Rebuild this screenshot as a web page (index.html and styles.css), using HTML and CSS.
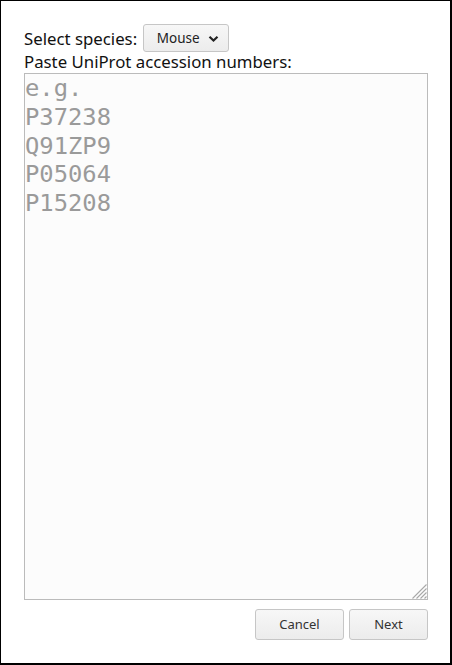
FILE: index.html
```html
<!DOCTYPE html>
<html>
<head>
<meta charset="utf-8">
<link rel="stylesheet" href="styles.css">
</head>
<body>
<div class="frame">
  <div class="species-row">
    <span class="label">Select species:</span>
    <button class="select-btn" type="button">Mouse
      <svg class="chev" width="11" height="8" viewBox="0 0 11 8"><path d="M1.5 1.8 L5.5 5.6 L9.5 1.8" fill="none" stroke="#222" stroke-width="2.2"/></svg>
    </button>
  </div>
  <div class="label paste-label">Paste UniProt accession numbers:</div>
  <div class="acc-wrap">
    <textarea class="acc" placeholder="e.g.&#10;P37238&#10;Q91ZP9&#10;P05064&#10;P15208"></textarea>
    <svg class="grip" width="16" height="16" viewBox="0 0 16 16"><path d="M15.5 1.5 L1.5 15.5 M15.5 5.5 L5.5 15.5 M15.5 9.5 L9.5 15.5 M15.5 13.5 L13.5 15.5" stroke="#a8a8a8" stroke-width="1.1" fill="none"/></svg>
  </div>
  <div class="actions">
    <button class="btn cancel" type="button">Cancel</button>
    <button class="btn next" type="button">Next</button>
  </div>
</div>
</body>
</html>
```
FILE: styles.css
```css
html, body { margin: 0; padding: 0; background: #fff; }
.frame {
  width: 452px; height: 665px; box-sizing: border-box;
  border-style: solid; border-color: #000;
  border-width: 1px 2px 2px 1px;
  padding: 23px 22px 0 23px;
  display: flex; flex-direction: column;
}
.label { font-family: "Noto Sans", sans-serif; font-size: 16.8px; color: #111; }
.species-row { display: flex; align-items: center; gap: 6px; height: 28px; }
.select-btn {
  height: 28px; width: 86px; box-sizing: border-box;
  border: 1px solid #c6c6c6; border-radius: 3px;
  background: linear-gradient(#f7f7f7, #ececec);
  font-family: "Noto Sans", sans-serif; font-size: 13.5px; color: #222;
  display: flex; align-items: center; justify-content: center; gap: 8px; padding: 0 0 0 3px;
}
.chev { margin-top: 1px; }
.paste-label { line-height: 20px; height: 20px; }
.acc-wrap { position: relative; margin-top: 1px; width: 404px; height: 527px; }
.acc {
  display: block; margin: 0; width: 404px; height: 527px; box-sizing: border-box;
  border: 1px solid #bbb; background: #fcfcfc; resize: none; outline: none;
  font-family: "DejaVu Sans Mono", monospace; font-size: 23.8px; line-height: 28.8px;
  padding: 0; color: #222;
}
.acc::placeholder { color: #9a9a9a; }
.grip { position: absolute; right: 1px; bottom: 1px; pointer-events: none; }
.actions { display: flex; justify-content: flex-end; gap: 5px; margin-top: 9px; width: 404px; }
.btn {
  height: 31px; box-sizing: border-box; border: 1px solid #c6c6c6; border-radius: 3px;
  background: linear-gradient(#f7f7f7, #ececec);
  font-family: "Noto Sans", sans-serif; font-size: 13px; color: #333;
  padding: 0 0 1px 0;
}
.cancel { width: 89px; }
.next { width: 79px; }
```
